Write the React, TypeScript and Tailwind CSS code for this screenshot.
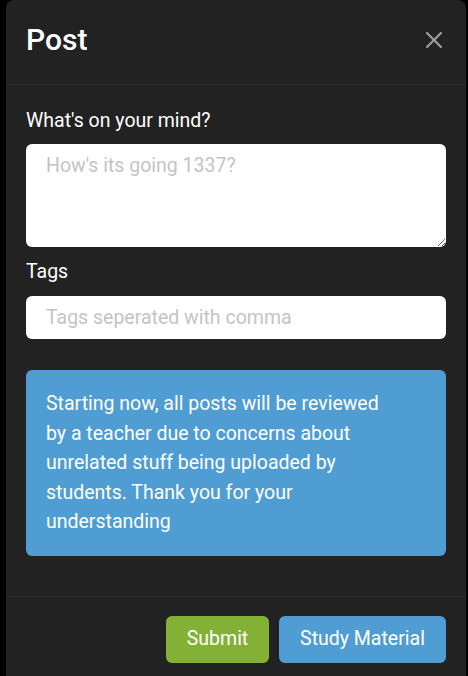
import { X } from "lucide-react";

export default function App() {
  return (
    <div className="h-[676px] w-[468px] overflow-hidden bg-black font-['Roboto','Liberation_Sans',sans-serif]">
      <div className="ml-[6px] w-[460px] min-h-[720px] rounded-t-lg bg-[#222222]">
        {/* Header */}
        <div className="flex items-center justify-between border-b border-[#2c2c2c] px-5 h-[85px]">
          <h1 className="text-[30px] leading-[36px] font-medium text-white mt-[-4px]">Post</h1>
          <button className="text-[#9b9b9b] mr-[-2px] mt-[-4px]">
            <X size={28} strokeWidth={2} />
          </button>
        </div>

        {/* Body */}
        <div className="px-5 pt-[22px] pb-[40px] border-b border-[#2c2c2c]">
          <label className="block text-[19.5px] leading-[27px] text-white mb-[10px]">
            What's on your mind?
          </label>
          <textarea
            className="block w-full h-[103px] rounded-md bg-white px-5 py-2 text-[19.5px] leading-[27px] text-gray-800 placeholder:text-[#c4c4c4] outline-none"
            placeholder="How's its going 1337?"
          />
          <label className="block text-[19.5px] leading-[27px] text-white mt-[11px] mb-[11px]">
            Tags
          </label>
          <input
            className="block w-full h-[43px] rounded-md bg-white px-5 text-[19.5px] text-gray-800 placeholder:text-[#c4c4c4] outline-none"
            placeholder="Tags seperated with comma"
          />
          <div className="mt-[31px] rounded-md bg-[#4f9dd2] px-5 pt-[19px] pb-[19px] text-[19.5px] leading-[29.5px] text-white">
            <p className="max-w-[350px]">
              Starting now, all posts will be reviewed by a teacher due to concerns about unrelated stuff being uploaded
              by students. Thank you for your understanding
            </p>
          </div>
        </div>

        {/* Footer */}
        <div className="flex justify-end gap-[10px] px-5 pt-[19px]">
          <button className="h-[47px] w-[103px] rounded-md bg-[#83b135] text-[19.5px] text-white">Submit</button>
          <button className="h-[47px] w-[167px] rounded-md bg-[#4f9dd2] text-[19.5px] text-white">Study Material</button>
        </div>
      </div>
    </div>
  );
}
